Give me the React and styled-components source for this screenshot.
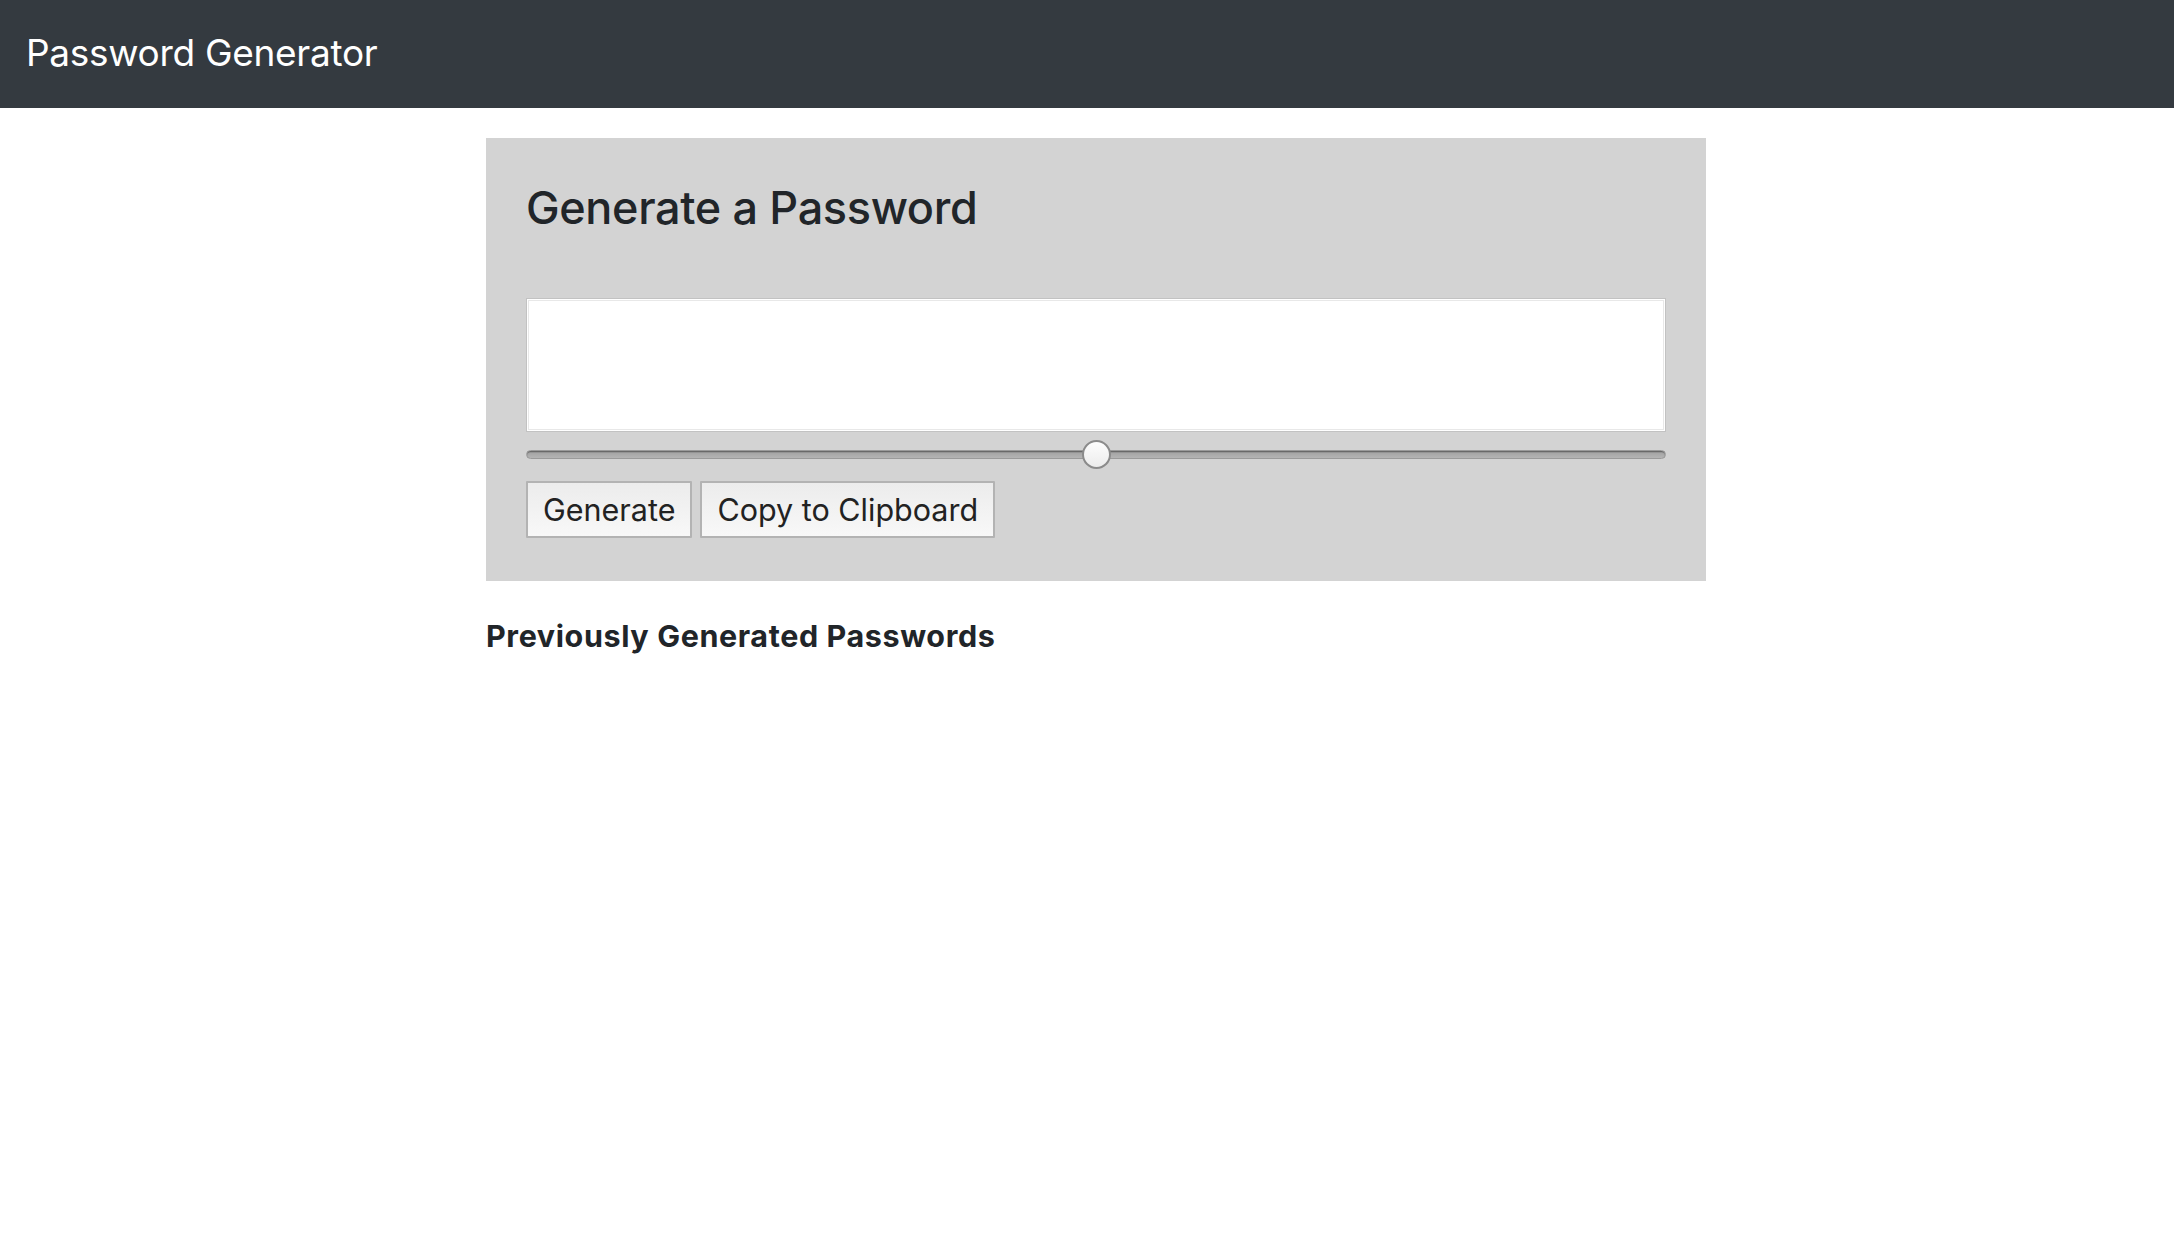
import React, { useState } from "react";
import styled, { createGlobalStyle } from "styled-components";

const GlobalStyle = createGlobalStyle`
  body {
    margin: 0;
    background: #fff;
    font-family: Inter, "Liberation Sans", sans-serif;
    color: #212529;
  }
`;

const Navbar = styled.nav`
  display: flex;
  align-items: center;
  height: 108px;
  padding: 0 26px;
  background-color: #343a40;
`;

const Brand = styled.div`
  color: #fff;
  font-size: 37px;
  font-weight: 400;
  letter-spacing: -0.3px;
  margin-top: -3px;
`;

const Main = styled.main`
  width: 1220px;
  margin: 30px 0 0 calc(50% - 601px);
`;

const Card = styled.section`
  display: flex;
  flex-direction: column;
  padding: 43px 40px 43px;
  background-color: #d3d3d3;
`;

const Title = styled.h2`
  margin: 0 0 63px;
  font-size: 45px;
  font-weight: 500;
  line-height: 1.2;
  letter-spacing: -0.35px;
`;

const Output = styled.input`
  box-sizing: border-box;
  height: 134px;
  width: 100%;
  margin: 0;
  padding: 0 12px;
  border: 1px solid #c2c2c2;
  box-shadow: inset 0 0 0 1px #fff, inset 0 0 0 2px #e8e8e8;
  background: #fff;
  font-family: "Liberation Mono", monospace;
  font-size: 28px;
  outline: none;
`;

const Slider = styled.input`
  -webkit-appearance: none;
  appearance: none;
  width: 100%;
  height: 30px;
  margin: 7px 0 0;
  background: transparent;

  &::-webkit-slider-runnable-track {
    height: 9px;
    border-radius: 5px;
    border: 1px solid #9a9a9a;
    background: linear-gradient(#7a7a7a 0, #a6a6a6 30%, #b4b4b4 100%);
    box-shadow: inset 0 1px 1px #666;
  }

  &::-webkit-slider-thumb {
    -webkit-appearance: none;
    width: 29px;
    height: 29px;
    margin-top: -11px;
    border-radius: 50%;
    border: 2px solid #8b8b8b;
    box-sizing: border-box;
    background: linear-gradient(#fdfdfd, #ececec);
  }
`;

const ButtonRow = styled.div`
  display: flex;
  gap: 8px;
  margin-top: 12px;
`;

const Button = styled.button`
  height: 57px;
  padding: 0 15px;
  border: 2px solid #b3b3b3;
  border-radius: 1px;
  background: linear-gradient(#ececec, #f8f8f8);
  color: #222;
  font-family: Inter, "Liberation Sans", sans-serif;
  font-size: 30.5px;
  cursor: pointer;
`;

const SubTitle = styled.h5`
  margin: 37px 0 0;
  font-size: 30.5px;
  font-weight: 700;
  line-height: 1.2;
  letter-spacing: 0.6px;
`;

export default function App() {
  const [length, setLength] = useState(50);
  const [password] = useState("");

  return (
    <>
      <GlobalStyle />
      <Navbar>
        <Brand>Password Generator</Brand>
      </Navbar>
      <Main>
        <Card>
          <Title>Generate a Password</Title>
          <Output type="text" value={password} readOnly />
          <Slider
            type="range"
            min="0"
            max="100"
            value={length}
            onChange={(e) => setLength(e.target.value)}
          />
          <ButtonRow>
            <Button>Generate</Button>
            <Button>Copy to Clipboard</Button>
          </ButtonRow>
        </Card>
        <SubTitle>Previously Generated Passwords</SubTitle>
      </Main>
    </>
  );
}
